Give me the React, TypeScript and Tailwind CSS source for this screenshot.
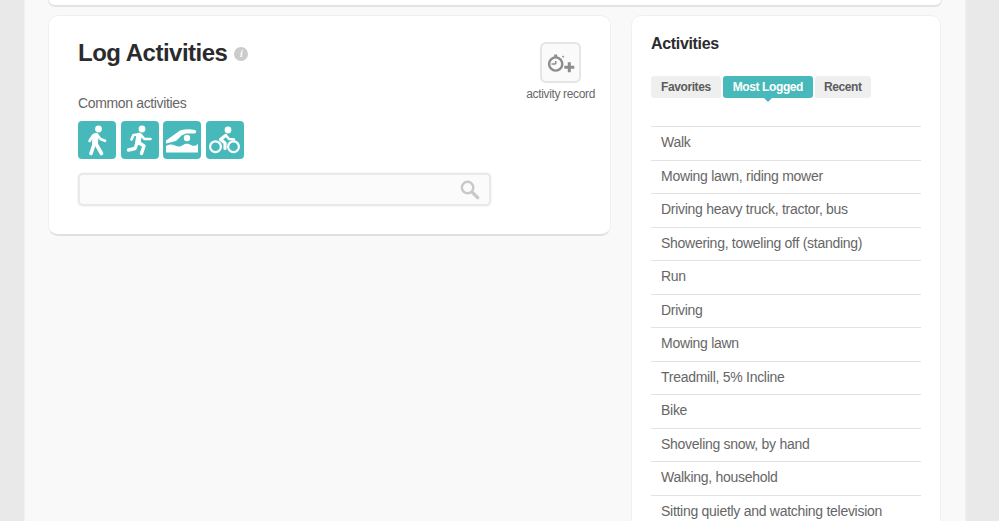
const activities = [
  'Walk',
  'Mowing lawn, riding mower',
  'Driving heavy truck, tractor, bus',
  'Showering, toweling off (standing)',
  'Run',
  'Driving',
  'Mowing lawn',
  'Treadmill, 5% Incline',
  'Bike',
  'Shoveling snow, by hand',
  'Walking, household',
  'Sitting quietly and watching television',
]

function WalkIcon() {
  return (
    <svg viewBox="0 0 38 38" className="w-[38px] h-[38px]" fill="none" stroke="#fff" strokeLinecap="round" strokeLinejoin="round">
      <circle cx="20.5" cy="8" r="3.4" fill="#fff" stroke="none" />
      <path d="M17.5 15 L17 22" strokeWidth="6" />
      <path d="M16.5 22 L13 32.5" strokeWidth="3.6" />
      <path d="M17.5 22 L23.5 32.5" strokeWidth="3.6" />
      <path d="M15 14.5 L11.5 20" strokeWidth="2.6" />
      <path d="M19 13.5 L22.5 18 L27 19.8" strokeWidth="2.6" />
    </svg>
  )
}

function RunIcon() {
  return (
    <svg viewBox="0 0 38 38" className="w-[38px] h-[38px]" fill="none" stroke="#fff" strokeLinecap="round" strokeLinejoin="round">
      <circle cx="21" cy="8" r="3.4" fill="#fff" stroke="none" />
      <path d="M18 14.5 L17 21" strokeWidth="5.5" />
      <path d="M17.5 21.5 L23 25 L20.5 32.5" strokeWidth="3.4" />
      <path d="M16 22 L14 27.5 L7.5 29" strokeWidth="3.4" />
      <path d="M17 13.5 L12.5 14 L10.5 18.5" strokeWidth="2.6" />
      <path d="M20 14 L23.5 18 L29.5 18" strokeWidth="2.6" />
    </svg>
  )
}

function SwimIcon() {
  return (
    <svg viewBox="0 0 38 38" className="w-[38px] h-[38px]" fill="#fff">
      <circle cx="24" cy="17" r="3.2" />
      <path d="M3 19.5 L17 9.5 Q24 7.5 32 9 Q34.5 10.5 32 12.5 L23 12.5 L18.5 14.5 L13 20 L3 22.5 Z" />
      <path d="M3 25 C6 23 9 23 12 24.5 C15 26 17 26 20 24 C23 22 25 22.5 28 24 C30.5 25.5 32.5 25 35 23 L35 31.5 L3 31.5 Z" />
    </svg>
  )
}

function BikeIcon() {
  return (
    <svg viewBox="0 0 38 38" className="w-[38px] h-[38px]" fill="none" stroke="#fff" strokeLinecap="round" strokeLinejoin="round">
      <circle cx="22" cy="9" r="3.4" fill="#fff" stroke="none" />
      <circle cx="9.5" cy="25.7" r="5.4" strokeWidth="2.2" />
      <circle cx="27.5" cy="25.7" r="5.4" strokeWidth="2.2" />
      <path d="M19.5 14.5 L14.5 18.5 L19 22 L19 27.5" strokeWidth="3.2" />
      <path d="M20 14.5 L23 18 L28 18.5" strokeWidth="2.6" />
    </svg>
  )
}

function TimerPlusIcon() {
  return (
    <svg viewBox="0 0 34 26" className="w-[34px] h-[26px]" fill="none" stroke="#8c8c8c">
      <circle cx="11.7" cy="14" r="6.6" strokeWidth="2.4" />
      <path d="M11.7 4.5 V7" strokeWidth="3" />
      <path d="M11.7 14 H7.5 M11.7 11 V14" strokeWidth="1.5" />
      <path d="M18.5 6 L19.7 7.2" strokeWidth="1.5" />
      <path d="M25.3 12.3 V22.3 M20.3 17.3 H30.3" strokeWidth="3" />
    </svg>
  )
}

export default function App() {
  return (
    <div className="h-[521px] overflow-hidden bg-[#e9e9e9] font-['Liberation_Sans',Arial,sans-serif]">
      <div className="ml-6 w-[942px] h-full bg-[#f9f9f9] border-l border-r border-[#f1f1f1] px-[23px]">
        <div className="h-[7px] bg-white rounded-b-[10px] border border-t-0 border-[#e3e3e3] border-b-2" />

        <div className="flex items-start gap-[20px] mt-[8px]">
          <section className="relative w-[563px] h-[221px] shrink-0 bg-white rounded-[10px] border border-[#f0f0f0] border-b-2 border-b-[#e0e0e0] pl-[29px] pt-[21px]">
            <div className="flex items-center gap-[7px]">
              <h1 className="text-[24px] leading-[31px] tracking-[-0.5px] font-bold text-[#2b2b2e]">Log Activities</h1>
              <span className="mt-0.5 w-[14px] h-[14px] rounded-full bg-[#cbcbcb] text-white text-[10px] leading-[14px] text-center italic font-bold font-['Liberation_Serif',serif]">i</span>
            </div>
            <p className="mt-[26px] text-[14px] leading-[18px] tracking-[-0.35px] text-[#666666]">Common activities</p>
            <div className="flex gap-[4.67px] mt-[9px]">
              <span className="w-[38px] h-[38px] rounded-[4px] bg-[#47b9ba]"><WalkIcon /></span>
              <span className="w-[38px] h-[38px] rounded-[4px] bg-[#47b9ba]"><RunIcon /></span>
              <span className="w-[38px] h-[38px] rounded-[4px] bg-[#47b9ba]"><SwimIcon /></span>
              <span className="w-[38px] h-[38px] rounded-[4px] bg-[#47b9ba]"><BikeIcon /></span>
            </div>
            <div className="flex items-center justify-end mt-[14px] w-[413px] h-[33px] rounded-[5px] bg-[#fbfbfb] border-2 border-[#e9e9e9] shadow-[0_0_2px_rgba(0,0,0,0.12)] pr-[9px]">
              <svg viewBox="0 0 22 22" className="w-[21px] h-[21px]" fill="none" stroke="#c9c9c9" strokeLinecap="round">
                <circle cx="9" cy="9" r="6" strokeWidth="2.6" />
                <path d="M14 14 L19.5 19.5" strokeWidth="3.6" />
              </svg>
            </div>

            <div className="absolute top-[26px] right-[15px] flex flex-col items-center">
              <div className="flex items-center justify-center w-[41px] h-[41px] rounded-[6px] bg-[#fafafa] border-2 border-[#e5e5e5]">
                <TimerPlusIcon />
              </div>
              <span className="mt-[4px] text-[12px] leading-[14px] tracking-[-0.35px] text-[#6a6a6a]">activity record</span>
            </div>
          </section>

          <section className="w-[310px] h-[600px] shrink-0 bg-white rounded-[10px] border border-[#f0f0f0] pl-[19px] pr-[18px] pt-[18px]">
            <h2 className="text-[16px] leading-[20px] tracking-[-0.33px] font-bold text-[#2b2b2e]">Activities</h2>
            <div className="flex gap-[2.5px] mt-[22px] text-[12px] leading-[22px] tracking-[-0.4px] font-bold">
              <span className="px-[10px] rounded-[3px] bg-[#efefef] text-[#5c5c5c]">Favorites</span>
              <span className="relative px-[9.5px] rounded-[3px] bg-[#47b9ba] text-white">
                Most Logged
                <span className="absolute left-1/2 -bottom-[4px] -ml-[4px] border-x-[4px] border-x-transparent border-t-[4px] border-t-[#47b9ba]" />
              </span>
              <span className="px-[9px] rounded-[3px] bg-[#efefef] text-[#5c5c5c]">Recent</span>
            </div>
            <ul className="mt-[28px] w-[270px]">
              {activities.map((name) => (
                <li key={name} className="h-[33.5px] border-t border-[#e2e2e2] pl-[10px] text-[14px] leading-[31px] tracking-[-0.28px] text-[#666666] whitespace-nowrap">
                  {name}
                </li>
              ))}
            </ul>
          </section>
        </div>
      </div>
    </div>
  )
}
